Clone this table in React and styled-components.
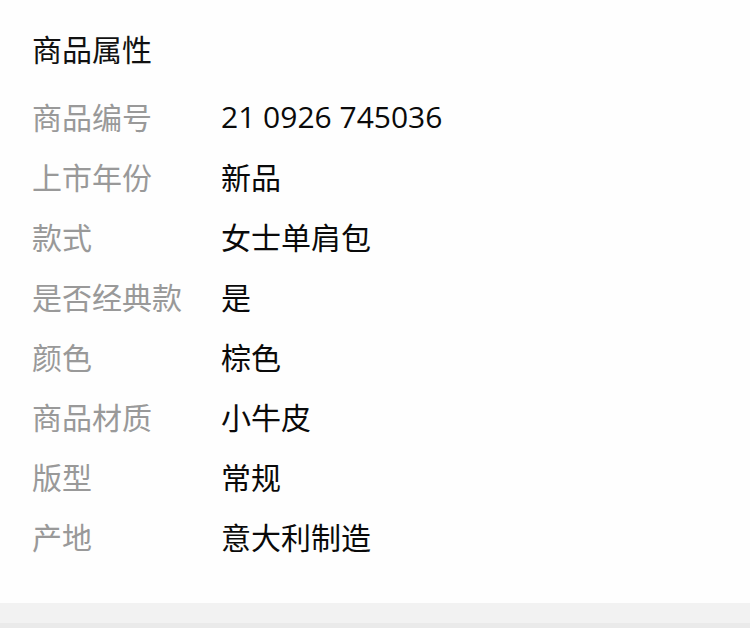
import React from "react"
import styled, { createGlobalStyle } from "styled-components"

const GlobalStyle = createGlobalStyle`
  html, body {
    margin: 0;
    padding: 0;
    background: #fff;
  }
  body {
    font-family: "Open Sans", "Noto Sans CJK SC", sans-serif;
  }
`

const Section = styled.section`
  background: #fefefe;
  padding: 30px 32px 37px;
`

const Title = styled.h2`
  margin: 0;
  font-size: 30px;
  font-weight: 400;
  line-height: 40px;
  color: #111;
`

const List = styled.dl`
  margin: 16px 0 0;
  padding: 0;
`

const Row = styled.div`
  display: flex;
  align-items: center;
  height: 60px;
`

const Label = styled.dt`
  width: 189px;
  flex-shrink: 0;
  font-size: 30px;
  color: #999;
`

const Value = styled.dd`
  margin: 0;
  font-size: 30px;
  color: #0a0a0a;
`

const Divider = styled.div`
  height: 20px;
  background: #f2f2f2;
  border-bottom: 6px solid #eaeaea;
`

const attrs = [
  { label: "商品编号", value: "21 0926 745036" },
  { label: "上市年份", value: "新品" },
  { label: "款式", value: "女士单肩包" },
  { label: "是否经典款", value: "是" },
  { label: "颜色", value: "棕色" },
  { label: "商品材质", value: "小牛皮" },
  { label: "版型", value: "常规" },
  { label: "产地", value: "意大利制造" }
]

const App = () =>
  <>
    <GlobalStyle />
    <Section>
      <Title>商品属性</Title>
      <List>
        {attrs.map(a =>
          <Row key={a.label}>
            <Label>{a.label}</Label>
            <Value>{a.value}</Value>
          </Row>
        )}
      </List>
    </Section>
    <Divider />
  </>

export default App
